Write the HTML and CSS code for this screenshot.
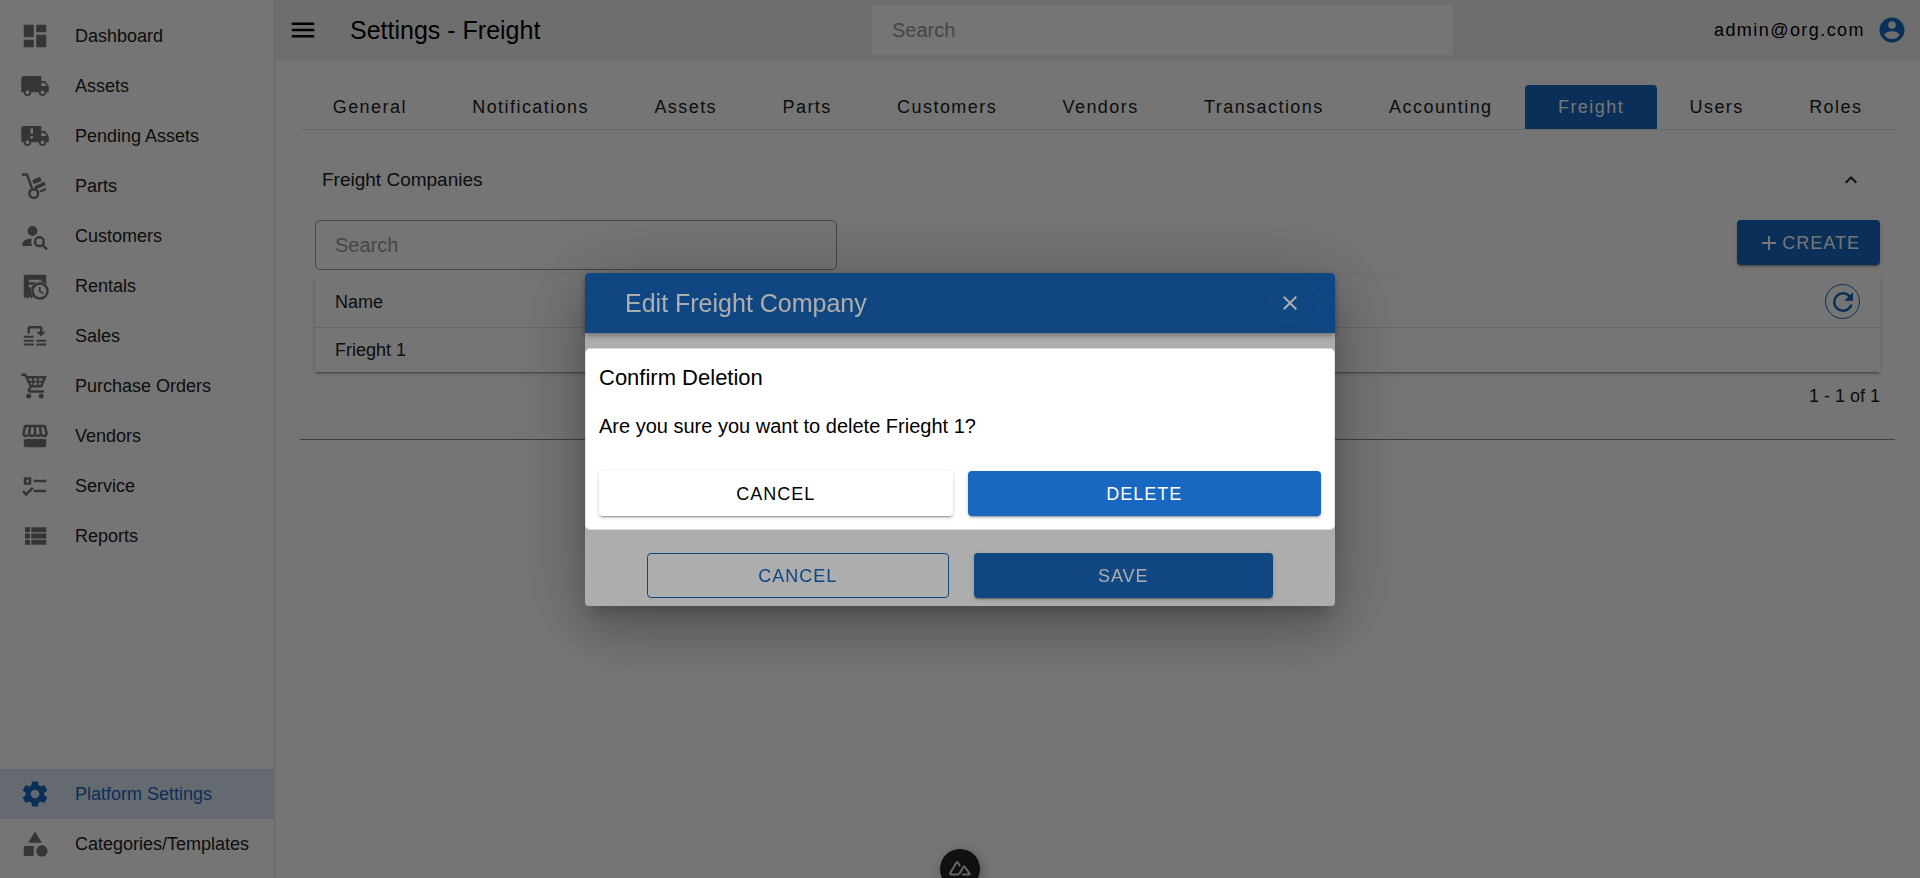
FILE: index.html
```html
<!DOCTYPE html>
<html lang="en">
<head>
    <meta charset="UTF-8">
    <meta name="viewport" content="width=device-width, initial-scale=1.0">
    <title>Settings - Freight</title>
    <link rel="stylesheet" href="styles.css">
</head>
<body>

    <div class="app">
        <nav class="sidebar">
            <div class="nav-list">
                <a class="nav-item" href="#">
                    <svg class="icon" viewBox="0 0 24 24"><path d="M13,3V9H21V3M13,21H21V11H13M3,21H11V15H3M3,13H11V3H3V13Z"/></svg>
                    <span>Dashboard</span>
                </a>
                <a class="nav-item" href="#">
                    <svg class="icon" viewBox="0 0 24 24"><path d="M18,18.5A1.5,1.5 0 0,1 16.5,17A1.5,1.5 0 0,1 18,15.5A1.5,1.5 0 0,1 19.5,17A1.5,1.5 0 0,1 18,18.5M19.5,9.5L21.46,12H17V9.5M6,18.5A1.5,1.5 0 0,1 4.5,17A1.5,1.5 0 0,1 6,15.5A1.5,1.5 0 0,1 7.5,17A1.5,1.5 0 0,1 6,18.5M20,8H17V4H3C1.89,4 1,4.89 1,6V17H3A3,3 0 0,0 6,20A3,3 0 0,0 9,17H15A3,3 0 0,0 18,20A3,3 0 0,0 21,17H23V12L20,8Z"/></svg>
                    <span>Assets</span>
                </a>
                <a class="nav-item" href="#">
                    <svg class="icon" viewBox="0 0 24 24"><path fill-rule="evenodd" d="M18,18.5A1.5,1.5 0 0,1 16.5,17A1.5,1.5 0 0,1 18,15.5A1.5,1.5 0 0,1 19.5,17A1.5,1.5 0 0,1 18,18.5M19.5,9.5L21.46,12H17V9.5M6,18.5A1.5,1.5 0 0,1 4.5,17A1.5,1.5 0 0,1 6,15.5A1.5,1.5 0 0,1 7.5,17A1.5,1.5 0 0,1 6,18.5M20,8H17V4H3C1.89,4 1,4.89 1,6V17H3A3,3 0 0,0 6,20A3,3 0 0,0 9,17H15A3,3 0 0,0 18,20A3,3 0 0,0 21,17H23V12L20,8ZM8.4,6H10.4V10H8.4ZM8.4,12H10.4V14H8.4Z"/></svg>
                    <span>Pending Assets</span>
                </a>
                <a class="nav-item" href="#">
                    <svg class="icon" viewBox="0 0 24 24"><path d="M9.9,7.2L16,4.5L17.3,7.9L10.9,10.6ZM11.3,12.4L19.3,8.6L20.7,11.2L12.5,14.8ZM15.6,15.5L20.8,13.6V15.3L16.3,17.2Z"/><path class="line" d="M1.5,2.8H5.6L9.6,14"/><circle class="line" cx="11" cy="18" r="3.5"/></svg>
                    <span>Parts</span>
                </a>
                <a class="nav-item" href="#">
                    <svg class="icon" viewBox="0 0 24 24"><path d="M15.5,12C18,12 20,14 20,16.5C20,17.38 19.75,18.21 19.31,18.9L22.39,22L21,23.39L17.88,20.32C17.19,20.75 16.37,21 15.5,21C13,21 11,19 11,16.5C11,14 13,12 15.5,12M15.5,14A2.5,2.5 0 0,0 13,16.5A2.5,2.5 0 0,0 15.5,19A2.5,2.5 0 0,0 18,16.5A2.5,2.5 0 0,0 15.5,14M10,4A4,4 0 0,1 14,8C14,8.91 13.69,9.75 13.18,10.43C12.32,10.75 11.55,11.26 10.91,11.9L10,12A4,4 0 0,1 6,8A4,4 0 0,1 10,4M2,20V18C2,15.88 5.31,14.14 9.5,14C9.18,14.78 9,15.62 9,16.5C9,17.79 9.38,19 10,20H2Z"/></svg>
                    <span>Customers</span>
                </a>
                <a class="nav-item" href="#">
                    <svg class="icon" viewBox="0 0 24 24"><path fill-rule="evenodd" d="M3,3H21V11A7,7 0 0,0 10.5,20.3L9,22L7.5,20.5L6,22L4.5,20.5L3,22ZM7,7V9H17V7ZM7,11V13H10.2L11.7,11Z"/><circle class="line" cx="16" cy="16" r="6"/><path class="line thin" d="M15.8,12.5V16.3L18.6,18"/></svg>
                    <span>Rentals</span>
                </a>
                <a class="nav-item" href="#">
                    <svg class="icon" viewBox="0 0 24 24"><path d="M13.2,8.6H20.6L16.9,12.3ZM3,11.8H11V13.4H3ZM3,14.9H11V16.5H3ZM3,18H11V19.6H3ZM13,14.9H21V16.5H13ZM13,18H21V19.6H13Z"/><path class="line" d="M7,10V6Q7,5 8,5H16Q17,5 17,6V9"/></svg>
                    <span>Sales</span>
                </a>
                <a class="nav-item" href="#">
                    <svg class="icon" viewBox="0 0 24 24"><path class="line" d="M1,3H4.2L8.8,12.6L7,15.2Q6.6,16.3 8,16.3H19.2M5,5H20L17,12.2H8.6"/><path class="line thin" d="M7,8.5H18.5M10.3,5V12M14.3,5V12"/><circle cx="7" cy="20" r="2"/><circle cx="17" cy="20" r="2"/></svg>
                    <span>Purchase Orders</span>
                </a>
                <a class="nav-item" href="#">
                    <svg class="icon" viewBox="0 0 24 24"><path fill-rule="evenodd" d="M4.8,3H19.2C20.2,3 20.9,3.6 21.1,4.5L22.1,9.2C22.6,11.6 21.2,13 19.3,13C18.2,13 17.3,12.6 16.9,12C15.6,13.3 13.2,13.3 12,12C10.8,13.3 8.4,13.3 7.1,12C6.7,12.6 5.8,13 4.7,13C2.8,13 1.4,11.6 1.9,9.2L2.9,4.5C3.1,3.6 3.8,3 4.8,3ZM5,5L3.9,9.6C3.6,11.4 6,11.5 6.3,9.7L7,5ZM9,5L8.4,9.6C8.3,11.4 10.9,11.4 11,9.6V5ZM13,5V9.6C13.1,11.4 15.7,11.4 15.6,9.6L15,5ZM17,5L17.7,9.7C18,11.5 20.4,11.4 20.1,9.6L19,5Z"/><path d="M3,14.3Q5.5,15 7.1,14Q9.6,15.3 12,14Q14.4,15.3 16.9,14Q18.5,15 21,14.3V19Q21,21 19,21H5Q3,21 3,19Z"/></svg>
                    <span>Vendors</span>
                </a>
                <a class="nav-item" href="#">
                    <svg class="icon" viewBox="0 0 24 24"><path class="line" d="M4,6H8V10H4ZM11,8H21M11,16H21M2.4,16.2L5,18.7L10.2,13.5"/></svg>
                    <span>Service</span>
                </a>
                <a class="nav-item" href="#">
                    <svg class="icon" viewBox="0 0 24 24"><path d="M9,5V9H21V5M9,19H21V15H9M9,14H21V10H9M4,9H8V5H4M4,19H8V15H4M4,14H8V10H4V14Z"/></svg>
                    <span>Reports</span>
                </a>
            </div>
            <div class="nav-list">
                <a class="nav-item active" href="#">
                    <svg class="icon" viewBox="0 0 24 24"><path d="M12,15.5A3.5,3.5 0 0,1 8.5,12A3.5,3.5 0 0,1 12,8.5A3.5,3.5 0 0,1 15.5,12A3.5,3.5 0 0,1 12,15.5M19.43,12.97C19.47,12.65 19.5,12.33 19.5,12C19.5,11.67 19.47,11.34 19.43,11L21.54,9.37C21.73,9.22 21.78,8.95 21.66,8.73L19.66,5.27C19.54,5.05 19.27,4.96 19.05,5.05L16.56,6.05C16.04,5.66 15.5,5.32 14.87,5.07L14.5,2.42C14.46,2.18 14.25,2 14,2H10C9.75,2 9.54,2.18 9.5,2.42L9.13,5.07C8.5,5.32 7.96,5.66 7.44,6.05L4.95,5.05C4.73,4.96 4.46,5.05 4.34,5.27L2.34,8.73C2.21,8.95 2.27,9.22 2.46,9.37L4.57,11C4.53,11.34 4.5,11.67 4.5,12C4.5,12.33 4.53,12.65 4.57,12.97L2.46,14.63C2.27,14.78 2.21,15.05 2.34,15.27L4.34,18.73C4.46,18.95 4.73,19.03 4.95,18.95L7.44,17.94C7.96,18.34 8.5,18.68 9.13,18.93L9.5,21.58C9.54,21.82 9.75,22 10,22H14C14.25,22 14.46,21.82 14.5,21.58L14.87,18.93C15.5,18.67 16.04,18.34 16.56,17.94L19.05,18.95C19.27,19.03 19.54,18.95 19.66,18.73L21.66,15.27C21.78,15.05 21.73,14.78 21.54,14.63L19.43,12.97Z"/></svg>
                    <span>Platform Settings</span>
                </a>
                <a class="nav-item" href="#">
                    <svg class="icon" viewBox="0 0 24 24"><path d="M11,13.5V21.5H3V13.5H11M12,2L17.5,11H6.5L12,2M17.5,13C20,13 22,15 22,17.5C22,20 20,22 17.5,22C15,22 13,20 13,17.5C13,15 15,13 17.5,13Z"/></svg>
                    <span>Categories/Templates</span>
                </a>
            </div>
        </nav>

        <div class="page">
            <header class="topbar">
                <div class="topbar-left">
                    <button class="icon-btn" aria-label="Menu">
                        <svg class="icon" viewBox="0 0 24 24"><path d="M3,6H21V8H3V6M3,11H21V13H3V11M3,16H21V18H3V16Z"/></svg>
                    </button>
                    <h1>Settings - Freight</h1>
                </div>
                <input class="topbar-search" type="search" placeholder="Search" aria-label="Search">
                <button class="user">
                    admin@org.com
                    <svg class="icon" viewBox="0 0 24 24"><path d="M12,19.2C9.5,19.2 7.29,17.92 6,16C6.03,14 10,12.9 12,12.9C14,12.9 17.97,14 18,16C16.71,17.92 14.5,19.2 12,19.2M12,5A3,3 0 0,1 15,8A3,3 0 0,1 12,11A3,3 0 0,1 9,8A3,3 0 0,1 12,5M12,2A10,10 0 0,0 2,12A10,10 0 0,0 12,22A10,10 0 0,0 22,12C22,6.47 17.5,2 12,2Z"/></svg>
                </button>
            </header>

            <main class="content">
                <div class="tabs">
                    <button class="tab">General</button>
                    <button class="tab">Notifications</button>
                    <button class="tab">Assets</button>
                    <button class="tab">Parts</button>
                    <button class="tab">Customers</button>
                    <button class="tab">Vendors</button>
                    <button class="tab">Transactions</button>
                    <button class="tab">Accounting</button>
                    <button class="tab active">Freight</button>
                    <button class="tab">Users</button>
                    <button class="tab">Roles</button>
                </div>

                <section class="panel">
                    <button class="panel-title">
                        Freight Companies
                        <svg class="icon small" viewBox="0 0 24 24"><path d="M7.41,15.41L12,10.83L16.59,15.41L18,14L12,8L6,14L7.41,15.41Z"/></svg>
                    </button>
                    <div class="toolbar">
                        <input class="table-search" type="search" placeholder="Search" aria-label="Search freight companies">
                        <button class="btn primary create">
                            <svg class="icon small" viewBox="0 0 24 24"><path d="M19,13H13V19H11V13H5V11H11V5H13V11H19V13Z"/></svg>
                            CREATE
                        </button>
                    </div>
                    <table class="companies">
                        <thead>
                            <tr>
                                <th>Name</th>
                                <th class="tools">
                                    <button class="refresh" aria-label="Refresh">
                                        <svg class="icon" viewBox="0 0 24 24"><path d="M17.65,6.35C16.2,4.9 14.21,4 12,4A8,8 0 0,0 4,12A8,8 0 0,0 12,20C15.73,20 18.84,17.45 19.73,14H17.65C16.83,16.33 14.61,18 12,18A6,6 0 0,1 6,12A6,6 0 0,1 12,6C13.66,6 15.14,6.69 16.22,7.78L13,11H20V4L17.65,6.35Z"/></svg>
                                    </button>
                                </th>
                            </tr>
                        </thead>
                        <tbody>
                            <tr>
                                <td colspan="2">Frieght 1</td>
                            </tr>
                        </tbody>
                    </table>
                    <p class="page-count">1 - 1 of 1</p>
                </section>
            </main>
        </div>
    </div>

    <button class="devtools" aria-label="Devtools">
        <svg viewBox="0 0 22 15"><path d="M8,13.5H2.2Q0.6,13.2 1.4,11.8L7.2,2Q8.2,0.7 9.2,2L11,5.2M8,13.5Q10,13.5 11,11.8L14.2,6.2Q15.2,4.8 16.1,6.2L20.3,12.2Q20.9,13.5 19.6,13.5H13.2"/></svg>
    </button>

    <!-- edit dialog -->
    <div class="overlay">
        <div class="dialog" role="dialog" aria-label="Edit Freight Company">
            <div class="dialog-bar">
                <h2>Edit Freight Company</h2>
                <button class="close" aria-label="Close">
                    <svg class="icon small" viewBox="0 0 24 24"><path d="M19,6.41L17.59,5L12,10.59L6.41,5L5,6.41L10.59,12L5,17.59L6.41,19L12,13.41L17.59,19L19,17.59L13.41,12L19,6.41Z"/></svg>
                </button>
            </div>
            <div class="dialog-actions">
                <button class="btn outlined">CANCEL</button>
                <button class="btn primary">SAVE</button>
            </div>
        </div>
    </div>

    <!-- delete confirmation, on top of the edit dialog -->
    <div class="overlay">
        <div class="confirm" role="alertdialog" aria-label="Confirm Deletion">
            <h2>Confirm Deletion</h2>
            <p>Are you sure you want to delete Frieght 1?</p>
            <div class="confirm-actions">
                <button class="btn">CANCEL</button>
                <button class="btn primary">DELETE</button>
            </div>
        </div>
    </div>

</body>
</html>
```
FILE: styles.css
```css
* {
    box-sizing: border-box;
}
body {
    margin: 0;
    font-family: Arial, "Liberation Sans", sans-serif;
    font-size: 18px;
    line-height: 24px;
    color: #212121;
    background-color: #fff;
}
h1, h2, p {
    margin: 0;
    font-weight: normal;
}
button, input {
    font: inherit;
    color: inherit;
}
button {
    padding: 0;
    border: none;
    background: none;
    cursor: pointer;
}
.icon {
    flex: none;
    display: block;
    width: 30px;
    height: 30px;
    fill: currentColor;
}
.icon.small {
    width: 24px;
    height: 24px;
}
.line {
    fill: none;
    stroke: currentColor;
    stroke-width: 2;
}
.line.thin {
    stroke-width: 1.4;
}

/* layout */
.app {
    display: flex;
    min-height: 100vh;
}
.sidebar {
    flex: none;
    width: 275px;
    display: flex;
    flex-direction: column;
    justify-content: space-between;
    padding: 11px 0 9px;
    border-right: 1px solid #e0e0e0;
}
.nav-item {
    display: flex;
    align-items: center;
    gap: 25px;
    height: 50px;
    padding: 0 20px;
    color: #212121;
    text-decoration: none;
    white-space: nowrap;
}
.nav-item .icon {
    color: #757575;
}
.nav-item.active {
    background-color: #dae8f3;
}
.nav-item.active,
.nav-item.active .icon {
    color: #1867c0;
}
.page {
    flex: 1;
    min-width: 0;
}

/* top bar */
.topbar {
    display: grid;
    grid-template-columns: 597fr 581fr 467fr;
    align-items: center;
    height: 60px;
    background-color: #f0f0f0;
    color: #000;
}
.topbar-left {
    display: flex;
    align-items: center;
    gap: 32px;
    padding-left: 13px;
}
.topbar h1 {
    font-size: 25px;
    line-height: 32px;
}
.topbar-search {
    width: 100%;
    height: 50px;
    padding: 0 20px;
    border: none;
    border-radius: 4px;
    background-color: #fff;
    font-size: 20px;
}
input::placeholder {
    color: #9a9a9a;
    opacity: 1;
}
.user {
    justify-self: end;
    display: flex;
    align-items: center;
    gap: 12px;
    padding-right: 13px;
    letter-spacing: 0.08em;
}
.user .icon {
    color: #1867c0;
}

/* tabs */
.content {
    padding: 25px;
}
.tabs {
    display: flex;
    border-bottom: 1px solid #e0e0e0;
}
.tab {
    flex: 1 1 auto;
    height: 44px;
    padding: 0 16px;
    border-radius: 4px 4px 0 0;
    letter-spacing: 0.08em;
}
.tab.active {
    background-color: #1867c0;
    color: #fff;
}

/* freight companies */
.panel {
    padding: 20px 15px 31px;
    border-bottom: 1px solid #888;
}
.panel-title {
    display: flex;
    align-items: center;
    justify-content: space-between;
    width: 100%;
    height: 60px;
    padding: 0 17px 0 7px;
    font-size: 19px;
}
.toolbar {
    display: flex;
    justify-content: space-between;
    align-items: flex-start;
    margin: 10px 0 6px;
}
.table-search {
    width: 33.33%;
    height: 50px;
    padding: 0 19px;
    border: 1px solid #9a9a9a;
    border-radius: 5px;
    background-color: #fff;
    font-size: 20px;
}
.companies {
    width: 100%;
    border-spacing: 0;
    box-shadow: 0 3px 1px -2px rgba(0, 0, 0, 0.2), 0 2px 2px rgba(0, 0, 0, 0.14), 0 1px 5px rgba(0, 0, 0, 0.12);
}
.companies th,
.companies td {
    padding: 0 20px;
    text-align: left;
    font-weight: normal;
}
.companies th {
    height: 52px;
    border-bottom: 1px solid #e0e0e0;
}
.companies td {
    height: 44px;
}
.companies .tools {
    width: 75px;
}
.refresh {
    display: flex;
    align-items: center;
    justify-content: center;
    width: 35px;
    height: 35px;
    border: 1px solid #1867c0;
    border-radius: 50%;
    color: #1867c0;
}
.page-count {
    margin-top: 12px;
    text-align: right;
}

/* buttons */
.btn {
    display: flex;
    align-items: center;
    justify-content: center;
    height: 45px;
    padding: 1px 20px 0;
    border-radius: 4px;
    background-color: #fff;
    letter-spacing: 1px;
    box-shadow: 0 3px 1px -2px rgba(0, 0, 0, 0.2), 0 2px 2px rgba(0, 0, 0, 0.14), 0 1px 5px rgba(0, 0, 0, 0.12);
}
.btn.primary {
    background-color: #1867c0;
    color: #fff;
}
.btn.outlined {
    border: 1px solid #1867c0;
    background: none;
    color: #1867c0;
    box-shadow: none;
}
.btn.create {
    gap: 1px;
    padding: 0 20px;
}

.devtools {
    position: fixed;
    left: 50%;
    bottom: -11px;
    width: 40px;
    height: 40px;
    margin-left: -20px;
    border-radius: 50%;
    background-color: #262626;
    box-shadow: 2px 2px 12px rgba(0, 0, 0, 0.3);
}
.devtools svg {
    display: block;
    width: 22px;
    margin: -2px auto 0;
    fill: none;
    stroke: #ddd;
    stroke-width: 2;
}

/* dialogs */
.overlay {
    position: fixed;
    inset: 0;
    display: flex;
    align-items: center;
    justify-content: center;
    background-color: rgba(0, 0, 0, 0.32);
}
.dialog {
    width: 750px;
    max-width: 90%;
    border-radius: 4px;
    background-color: #fff;
    box-shadow: 0 11px 15px -7px rgba(0, 0, 0, 0.2), 0 24px 38px 3px rgba(0, 0, 0, 0.14), 0 9px 80px 10px rgba(0, 0, 0, 0.2);
}
.dialog-bar {
    display: flex;
    align-items: center;
    justify-content: space-between;
    height: 60px;
    padding: 0 20px 0 40px;
    border-radius: 4px 4px 0 0;
    background-color: #1867c0;
    color: #fff;
    box-shadow: 0 2px 4px -1px rgba(0, 0, 0, 0.2), 0 4px 5px rgba(0, 0, 0, 0.14), 0 1px 10px rgba(0, 0, 0, 0.12);
}
.dialog-bar h2 {
    font-size: 25px;
    line-height: 32px;
}
.close {
    display: flex;
    align-items: center;
    justify-content: center;
    width: 50px;
    height: 50px;
    border: 1px solid #165eb0;
    border-radius: 50%;
}
.dialog-actions {
    display: flex;
    gap: 25px;
    padding: 220px 62px 8px;
}
.dialog-actions .btn,
.confirm-actions .btn {
    flex: 1 1 0;
    min-width: 0;
}
.confirm {
    width: 750px;
    max-width: 90%;
    padding: 13px;
    border: 1px solid #e0e0e0;
    border-radius: 5px;
    background-color: #fff;
    color: #000;
}
.confirm h2 {
    font-size: 22px;
    line-height: 32px;
}
.confirm p {
    margin: 19px 0 32px;
    font-size: 20px;
    line-height: 26px;
}
.confirm-actions {
    display: flex;
    gap: 15px;
}
```
